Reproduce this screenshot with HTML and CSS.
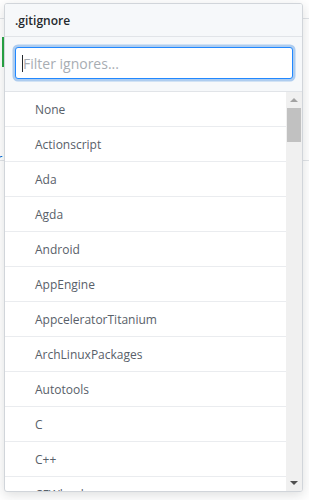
FILE: index.html
```html
<!DOCTYPE html>
<html>
<head>
<meta charset="utf-8">
<link rel="stylesheet" href="styles.css">
</head>
<body>
<div class="page">
  <div class="page-rule"></div>
  <div class="page-green"></div>
  <div class="page-link">r</div>
  <div class="page-underline"></div>
</div>
<div class="menu">
  <div class="menu-header">.gitignore</div>
  <div class="menu-filter">
    <div class="filter-input"><span class="caret"></span><span class="placeholder">Filter ignores...</span></div>
  </div>
  <div class="menu-body">
    <div class="menu-list">
      <div class="item">None</div>
      <div class="item">Actionscript</div>
      <div class="item">Ada</div>
      <div class="item">Agda</div>
      <div class="item">Android</div>
      <div class="item">AppEngine</div>
      <div class="item">AppceleratorTitanium</div>
      <div class="item">ArchLinuxPackages</div>
      <div class="item">Autotools</div>
      <div class="item">C</div>
      <div class="item">C++</div>
      <div class="item">CFWheels</div>
    </div>
    <div class="scrollbar">
      <div class="sb-btn"><span class="arrow-up"></span></div>
      <div class="sb-track"><div class="sb-thumb"></div></div>
      <div class="sb-btn"><span class="arrow-down"></span></div>
    </div>
  </div>
</div>
</body>
</html>
```
FILE: styles.css
```css
* { box-sizing: border-box; }
html, body { margin: 0; padding: 0; background: #fff; }
body {
  width: 309px;
  height: 500px;
  overflow: hidden;
  position: relative;
  font-family: "Segoe UI", "Open Sans", "Noto Sans", sans-serif;
}
.page { position: absolute; inset: 0; }
.page-rule { position: absolute; left: 0; right: 0; top: 18px; height: 1px; background: #e1e4e8; }
.page-green { position: absolute; left: 2px; top: 37px; width: 2px; height: 30px; background: #28a745; }
.page-link { position: absolute; left: -3px; top: 150px; font-size: 13px; color: #0366d6; line-height: 16px; }
.page-underline { position: absolute; left: 0; right: 0; top: 160px; height: 1px; background: #e1e4e8; }

.menu {
  position: absolute;
  left: 4px;
  top: 3px;
  width: 299px;
  height: 489px;
  background: #fff;
  border: 1px solid #d1d5da;
  border-radius: 3px;
  box-shadow: 0 3px 12px rgba(27,31,35,0.15);
  display: flex;
  flex-direction: column;
  overflow: hidden;
}
.menu-header {
  height: 33px;
  flex: none;
  padding: 0 10px;
  display: flex;
  align-items: center;
  background: #f6f8fa;
  border-bottom: 1px solid #e1e4e8;
  font-size: 12px;
  font-weight: 600;
  color: #24292e;
}
.menu-filter {
  flex: none;
  padding: 10px 9px 12px 10px;
  background: #f6f8fa;
  border-bottom: 1px solid #e1e4e8;
}
.filter-input {
  height: 32px;
  background: #fff;
  border: 1px solid #2188ff;
  border-radius: 3px;
  box-shadow: 0 0 0 2.5px rgba(3,102,214,0.3);
  display: flex;
  align-items: center;
  padding-left: 6px;
  font-size: 14px;
}
.caret { width: 1px; height: 17px; background: #24292e; margin-right: 0; }
.placeholder { color: #a8adb3; }
.menu-body {
  flex: 1;
  display: flex;
  min-height: 0;
}
.menu-list {
  flex: 1;
  overflow: hidden;
}
.item {
  height: 35px;
  padding-left: 30px;
  display: flex;
  align-items: center;
  border-bottom: 1px solid #eaecef;
  font-size: 12px;
  color: #586069;
}
.scrollbar {
  width: 16px;
  flex: none;
  background: #f0f0f0;
  display: flex;
  flex-direction: column;
}
.sb-btn {
  height: 16px;
  flex: none;
  display: flex;
  align-items: center;
  justify-content: center;
}
.arrow-up {
  width: 0; height: 0;
  border-left: 4px solid transparent;
  border-right: 4px solid transparent;
  border-bottom: 4px solid #a3a3a3;
}
.arrow-down {
  width: 0; height: 0;
  border-left: 4px solid transparent;
  border-right: 4px solid transparent;
  border-top: 4px solid #505050;
}
.sb-track { flex: 1; padding: 0 1px; }
.sb-thumb { height: 34px; background: #c1c1c1; }
```
